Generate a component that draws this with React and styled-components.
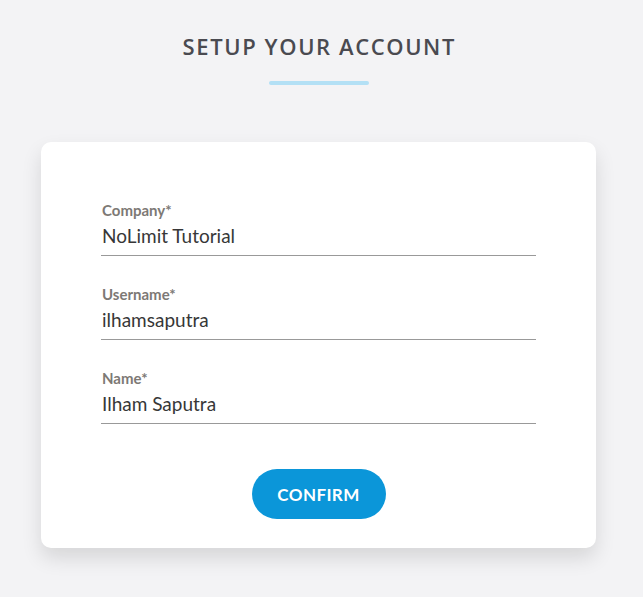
import React, { useState } from 'react';
import styled, { createGlobalStyle } from 'styled-components';

const GlobalStyle = createGlobalStyle`
  body {
    margin: 0;
    background-color: #f3f3f5;
    font-family: Lato, "Open Sans", sans-serif;
  }
`;

const Wrapper = styled.div`
  display: flex;
  flex-direction: column;
  align-items: center;
  padding: 33px 6px 40px 0;
`;

const Title = styled.h1`
  margin: 0 -1.6px 0 0;
  font-family: "Open Sans", sans-serif;
  font-size: 22px;
  line-height: 26px;
  font-weight: 600;
  color: #4a4a50;
  letter-spacing: 1.6px;
`;

const Divider = styled.div`
  width: 100px;
  height: 4px;
  margin-top: 22px;
  border-radius: 2px;
  background-color: #b3e0f5;
`;

const Card = styled.form`
  box-sizing: border-box;
  width: 555px;
  height: 406px;
  margin-top: 57px;
  padding: 59px 60px 0;
  background: #fff;
  border-radius: 10px;
  box-shadow: 0 10px 20px rgba(0, 0, 0, 0.12);
  display: flex;
  flex-direction: column;
`;

const Field = styled.label`
  display: flex;
  flex-direction: column;
  margin-bottom: 29px;
`;

const FieldLabel = styled.span`
  padding-left: 1px;
  font-size: 15px;
  line-height: 18px;
  font-weight: 700;
  color: #7d7975;
`;

const FieldInput = styled.input`
  box-sizing: border-box;
  height: 37px;
  padding: 0 2px 4px 1px;
  border: none;
  border-bottom: 1px solid #999;
  outline: none;
  font-family: Lato, sans-serif;
  font-size: 19px;
  color: #373737;
  background: transparent;
`;

const Confirm = styled.button`
  align-self: center;
  width: 134px;
  height: 50px;
  margin-top: 16px;
  border: none;
  border-radius: 25px;
  background-color: #0b96d9;
  color: #fff;
  font-family: Lato, sans-serif;
  font-size: 17px;
  font-weight: 700;
  letter-spacing: 0.4px;
  cursor: pointer;
`;

const fields = [
  { name: 'company', label: 'Company*', value: 'NoLimit Tutorial' },
  { name: 'username', label: 'Username*', value: 'ilhamsaputra' },
  { name: 'name', label: 'Name*', value: 'Ilham Saputra' },
];

const App = () => {
  const [values, setValues] = useState(
    Object.fromEntries(fields.map((f) => [f.name, f.value]))
  );

  const onChange = (event) => {
    setValues({ ...values, [event.target.name]: event.target.value });
  };

  return (
    <Wrapper>
      <GlobalStyle />
      <Title>SETUP YOUR ACCOUNT</Title>
      <Divider />
      <Card onSubmit={(e) => e.preventDefault()}>
        {fields.map((f) => (
          <Field key={f.name}>
            <FieldLabel>{f.label}</FieldLabel>
            <FieldInput name={f.name} value={values[f.name]} onChange={onChange} />
          </Field>
        ))}
        <Confirm type="submit">CONFIRM</Confirm>
      </Card>
    </Wrapper>
  );
};

export default App;
